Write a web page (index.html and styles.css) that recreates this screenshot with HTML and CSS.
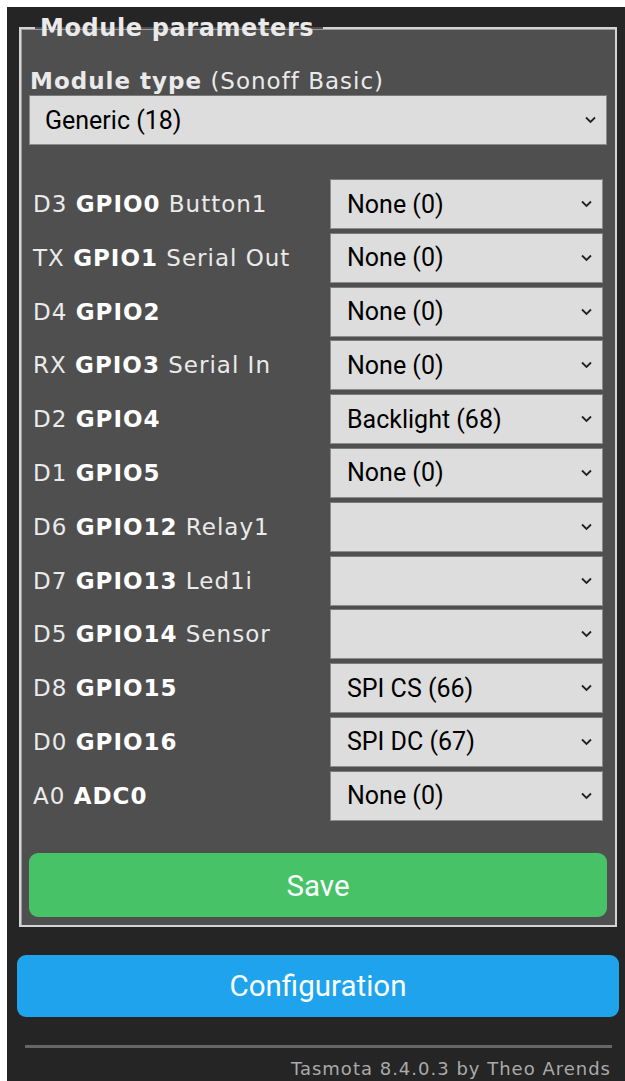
FILE: index.html
```html
<!DOCTYPE html>
<html lang="en">
<head>
<meta charset="utf-8">
<title>Configure Module</title>
<link rel="stylesheet" href="styles.css">
</head>
<body>
<div class="page">
  <div class="main">
    <fieldset class="params">
      <legend class="params-title">Module parameters</legend>
      <div class="type-label"><b>Module type</b> (Sonoff Basic)</div>
      <div class="select wide"><span>Generic (18)</span><svg class="chev" viewBox="0 0 12 8"><path d="M1.5 1.5 6 6l4.5-4.5"/></svg></div>

      <div class="gpio-list">
        <div class="gpio-row"><div class="pin">D3 <b>GPIO0</b> Button1</div><div class="select"><span>None (0)</span><svg class="chev" viewBox="0 0 12 8"><path d="M1.5 1.5 6 6l4.5-4.5"/></svg></div></div>
        <div class="gpio-row"><div class="pin">TX <b>GPIO1</b> Serial Out</div><div class="select"><span>None (0)</span><svg class="chev" viewBox="0 0 12 8"><path d="M1.5 1.5 6 6l4.5-4.5"/></svg></div></div>
        <div class="gpio-row"><div class="pin">D4 <b>GPIO2</b></div><div class="select"><span>None (0)</span><svg class="chev" viewBox="0 0 12 8"><path d="M1.5 1.5 6 6l4.5-4.5"/></svg></div></div>
        <div class="gpio-row"><div class="pin">RX <b>GPIO3</b> Serial In</div><div class="select"><span>None (0)</span><svg class="chev" viewBox="0 0 12 8"><path d="M1.5 1.5 6 6l4.5-4.5"/></svg></div></div>
        <div class="gpio-row"><div class="pin">D2 <b>GPIO4</b></div><div class="select"><span>Backlight (68)</span><svg class="chev" viewBox="0 0 12 8"><path d="M1.5 1.5 6 6l4.5-4.5"/></svg></div></div>
        <div class="gpio-row"><div class="pin">D1 <b>GPIO5</b></div><div class="select"><span>None (0)</span><svg class="chev" viewBox="0 0 12 8"><path d="M1.5 1.5 6 6l4.5-4.5"/></svg></div></div>
        <div class="gpio-row"><div class="pin">D6 <b>GPIO12</b> Relay1</div><div class="select"><span></span><svg class="chev" viewBox="0 0 12 8"><path d="M1.5 1.5 6 6l4.5-4.5"/></svg></div></div>
        <div class="gpio-row"><div class="pin">D7 <b>GPIO13</b> Led1i</div><div class="select"><span></span><svg class="chev" viewBox="0 0 12 8"><path d="M1.5 1.5 6 6l4.5-4.5"/></svg></div></div>
        <div class="gpio-row"><div class="pin">D5 <b>GPIO14</b> Sensor</div><div class="select"><span></span><svg class="chev" viewBox="0 0 12 8"><path d="M1.5 1.5 6 6l4.5-4.5"/></svg></div></div>
        <div class="gpio-row"><div class="pin">D8 <b>GPIO15</b></div><div class="select"><span>SPI CS (66)</span><svg class="chev" viewBox="0 0 12 8"><path d="M1.5 1.5 6 6l4.5-4.5"/></svg></div></div>
        <div class="gpio-row"><div class="pin">D0 <b>GPIO16</b></div><div class="select"><span>SPI DC (67)</span><svg class="chev" viewBox="0 0 12 8"><path d="M1.5 1.5 6 6l4.5-4.5"/></svg></div></div>
        <div class="gpio-row"><div class="pin">A0 <b>ADC0</b></div><div class="select"><span>None (0)</span><svg class="chev" viewBox="0 0 12 8"><path d="M1.5 1.5 6 6l4.5-4.5"/></svg></div></div>
      </div>

      <button class="btn btn-green" type="button">Save</button>
    </fieldset>

    <button class="btn btn-blue" type="button">Configuration</button>

    <footer class="foot">
      <hr class="rule">
      <div class="credit">Tasmota 8.4.0.3 by Theo Arends</div>
    </footer>
  </div>
</div>
</body>
</html>
```

FILE: styles.css
```css
html, body {
  margin: 0;
  padding: 0;
  background: #ffffff;
}

.page {
  margin: 7px 0 0 7px;
  min-height: calc(100vh - 7px);
  background: #252525;
  color: #eaeaea;
  font-family: "DejaVu Sans", Verdana, sans-serif;
  font-size: 23px;
  letter-spacing: 1px;
  overflow: hidden;
}

.main {
  padding: 8px 6px 0 10px;
}

/* module parameter group */
.params {
  margin: 0 2px;
  padding: 10px 8px 8px 8px;
  background: #4f4f4f;
  border: 2px solid #d4d4d4;
  box-shadow: inset 1px 1px 0 #9a9a9a;
}

.params-title {
  padding: 0 9px 0 5px;
  margin-left: 6px;
  font-weight: bold;
  font-size: 24px;
  letter-spacing: 0.6px;
  line-height: 26px;
  color: #eaeaea;
}

.type-label {
  line-height: 26px;
  margin-top: 17px;
  margin-left: 1px;
  white-space: nowrap;
}

.type-label b {
  font-weight: bold;
}

/* dropdown boxes */
.select {
  display: flex;
  align-items: center;
  justify-content: space-between;
  box-sizing: border-box;
  height: 50px;
  padding: 0 9px 0 16px;
  background: #dddddd;
  color: #000000;
  border: 1px solid #8c8c8c;
  border-top-color: #7a7a7a;
  font-family: Roboto, "Liberation Sans", sans-serif;
  font-size: 25px;
  letter-spacing: 0;
}

.select.wide {
  height: 50px;
  margin-top: 1px;
  padding-left: 15px;
}

.chev {
  width: 13px;
  height: 8px;
  flex: none;
  fill: none;
  stroke: #222;
  stroke-width: 1.8;
}

.gpio-list {
  display: flex;
  flex-direction: column;
  gap: 3.8px;
  margin-top: 34px;
  margin-right: 4px;
}

.gpio-row {
  display: grid;
  grid-template-columns: 1fr 273px;
  align-items: center;
}

.pin {
  padding-left: 4px;
  white-space: nowrap;
}

.pin b {
  font-weight: bold;
  color: #ffffff;
}

/* buttons */
.btn {
  display: block;
  width: 100%;
  border: 0;
  border-radius: 9px;
  color: #faffff;
  font-family: Roboto, "Liberation Sans", sans-serif;
  font-size: 29.5px;
  letter-spacing: 0;
  cursor: pointer;
}

.btn-green {
  margin-top: 32px;
  height: 64px;
  padding-top: 4px;
  background: #47c266;
}

.btn-blue {
  margin-top: 28px;
  height: 62px;
  background: #1fa3ec;
}

/* footer */
.foot {
  margin-top: 28px;
}

.rule {
  margin: 0 7px 0 8px;
  height: 0;
  border: 0;
  border-top: 3px solid #666666;
}

.credit {
  text-align: right;
  padding-right: 8px;
  margin-top: 10px;
  font-size: 18px;
  letter-spacing: 1px;
  color: #aaaaaa;
}
```
